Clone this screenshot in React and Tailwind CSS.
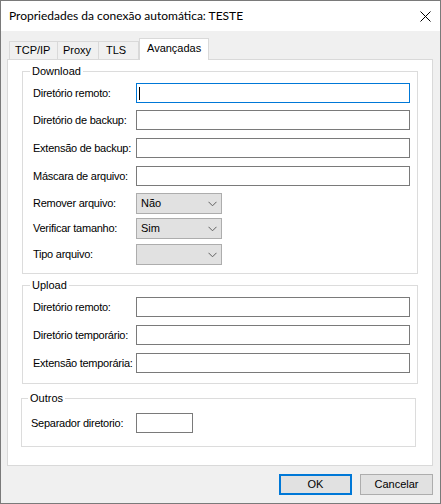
import React from "react";

const font = "font-['Liberation_Sans','Arial',sans-serif]";

function TextBox({ width = "w-[274px]", focused = false }) {
  return (
    <div
      className={`${width} h-[20px] bg-white border ${
        focused ? "border-[#0078d7]" : "border-[#7a7a7a]"
      } flex items-center`}
    >
      {focused && <span className="ml-[2px] w-px h-[13px] bg-black" />}
    </div>
  );
}

function Combo({ value }) {
  return (
    <div className="w-[86px] h-[21px] bg-[#e1e1e1] border border-[#adadad] flex items-center justify-between pl-[4px] pr-[4px]">
      <span className="leading-none">{value}</span>
      <svg width="9" height="6" viewBox="0 0 9 6">
        <path d="M0.5 0.8 L4.5 4.8 L8.5 0.8" fill="none" stroke="#606060" strokeWidth="1" />
      </svg>
    </div>
  );
}

function Row({ label, mt, children, labelW = "w-[103px]" }) {
  return (
    <div className={`flex items-center ${mt}`}>
      <div className={`${labelW} shrink-0 whitespace-nowrap tracking-[-0.25px]`}>{label}</div>
      {children}
    </div>
  );
}

function Group({ title, className, children, titleLeft = "left-[7px]" }) {
  return (
    <div className={`relative border border-[#dcdcdc] ${className}`}>
      <span className={`absolute ${titleLeft} top-[-8px] leading-[14px] px-[2px] bg-white whitespace-nowrap`}>
        {title}
      </span>
      {children}
    </div>
  );
}

export default function App() {
  return (
    <div
      className={`${font} text-[11px] text-black w-[441px] h-[504px] bg-[#f0f0f0] border border-[#7a7a7a] flex flex-col overflow-hidden`}
    >
      {/* Title bar */}
      <div className="h-[30px] bg-white flex items-center justify-between pl-[8px] pr-[9px] shrink-0">
        <span className="font-['Lato',sans-serif] text-[12px]">Propriedades da conexão automática: TESTE</span>
        <svg width="11" height="11" viewBox="0 0 11 11">
          <path d="M0.5 0.5 L10.5 10.5 M10.5 0.5 L0.5 10.5" stroke="#000" strokeWidth="1" fill="none" />
        </svg>
      </div>

      <div className="pl-[6px] pr-[7px] pt-[7px] flex flex-col">
        {/* Tabs */}
        <div className="flex items-end h-[21px] pl-[2px]">
          <div className="h-[18px] w-[48px] border-l border-t border-[#d9d9d9] bg-[#f0f0f0] flex items-center pl-[5px] leading-none">
            TCP/IP
          </div>
          <div className="h-[18px] w-[41px] border-l border-t border-[#d9d9d9] bg-[#f0f0f0] flex items-center pl-[5px] leading-none">
            Proxy
          </div>
          <div className="h-[18px] w-[41px] border-l border-t border-r border-[#d9d9d9] bg-[#f0f0f0] flex items-center pl-[7px] leading-none">
            TLS
          </div>
          <div className="relative z-10 h-[22px] -mb-px w-[70px] border-l border-t border-r border-[#d9d9d9] bg-white flex items-center pl-[7px] pb-[2px] leading-none">
            Avançadas
          </div>
        </div>

        {/* Panel */}
        <div className="h-[407px] bg-white border border-[#d9d9d9] flex flex-col">
          <Group title="Download" className="mt-[11px] mx-[14px] h-[203px] pt-[11px] pl-[10px] pr-[7px]">
            <Row label="Diretório remoto:" mt="">
              <TextBox focused />
            </Row>
            <Row label="Diretório de backup:" mt="mt-[7px]">
              <TextBox />
            </Row>
            <Row label="Extensão de backup:" mt="mt-[8px]">
              <TextBox />
            </Row>
            <Row label="Máscara de arquivo:" mt="mt-[8px]">
              <TextBox />
            </Row>
            <Row label="Remover arquivo:" mt="mt-[7px]">
              <Combo value="Não" />
            </Row>
            <Row label="Verificar tamanho:" mt="mt-[4px]">
              <Combo value="Sim" />
            </Row>
            <Row label="Tipo arquivo:" mt="mt-[5px]">
              <Combo value="" />
            </Row>
          </Group>

          <Group title="Upload" className="mt-[11px] mx-[14px] h-[99px] pt-[11px] pl-[10px] pr-[7px]">
            <Row label="Diretório remoto:" mt="">
              <TextBox />
            </Row>
            <Row label="Diretório temporário:" mt="mt-[8px]">
              <TextBox />
            </Row>
            <Row label="Extensão temporária:" mt="mt-[8px]">
              <TextBox />
            </Row>
          </Group>

          <Group
            title="Outros"
            titleLeft="left-[6px]"
            className="mt-[14px] ml-[13px] mr-[16px] h-[49px] pt-[14px] pl-[9px]"
          >
            <Row label="Separador diretorio:" mt="" labelW="w-[105px]">
              <TextBox width="w-[57px]" />
            </Row>
          </Group>
        </div>

        {/* Buttons */}
        <div className="flex justify-end gap-[8px] mt-[8px]">
          <button className="w-[73px] h-[21px] bg-[#e1e1e1] border-2 border-[#0078d7] flex items-center justify-center leading-none">
            OK
          </button>
          <button className="w-[73px] h-[21px] bg-[#e1e1e1] border border-[#adadad] flex items-center justify-center leading-none">
            Cancelar
          </button>
        </div>
      </div>
    </div>
  );
}
